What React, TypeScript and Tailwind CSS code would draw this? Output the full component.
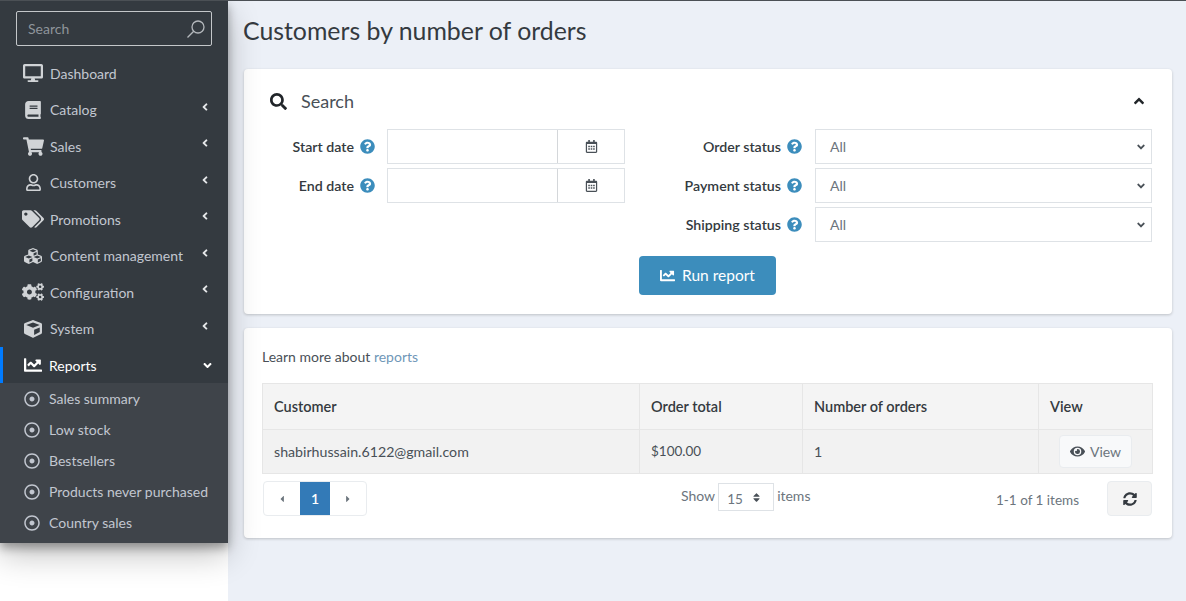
import { ReactNode } from "react";
import { IconType } from "react-icons";
import {
  FaAngleDown,
  FaAngleLeft,
  FaAngleUp,
  FaBook,
  FaCaretLeft,
  FaCaretRight,
  FaChartLine,
  FaCogs,
  FaCube,
  FaCubes,
  FaDesktop,
  FaEye,
  FaQuestionCircle,
  FaRegCalendarAlt,
  FaRegDotCircle,
  FaRegUser,
  FaSearch,
  FaShoppingCart,
  FaSort,
  FaSyncAlt,
  FaTags,
} from "react-icons/fa";

const menu: { label: string; icon: IconType; size: string; arrow?: boolean }[] = [
  { label: "Dashboard", icon: FaDesktop, size: "text-[20px]" },
  { label: "Catalog", icon: FaBook, size: "text-[18px]", arrow: true },
  { label: "Sales", icon: FaShoppingCart, size: "text-[21px]", arrow: true },
  { label: "Customers", icon: FaRegUser, size: "text-[17px]", arrow: true },
  { label: "Promotions", icon: FaTags, size: "text-[22px]", arrow: true },
  { label: "Content management", icon: FaCubes, size: "text-[18px]", arrow: true },
  { label: "Configuration", icon: FaCogs, size: "text-[22px]", arrow: true },
  { label: "System", icon: FaCube, size: "text-[18px]", arrow: true },
];

const reports = ["Sales summary", "Low stock", "Bestsellers", "Products never purchased", "Country sales"];

function Sidebar() {
  return (
    <aside className="relative z-10 shrink-0 w-[228px] h-[542px] bg-[#343a40] text-[#c2c7d0] shadow-[0_5px_9px_rgba(0,0,0,0.32),0_12px_30px_rgba(0,0,0,0.24)]">
      <div className="px-4 pt-[10px] pb-[9px]">
        <div className="flex items-center justify-between h-[35px] border border-[#c4c7ca] rounded-[2px] pl-[11px] pr-[5px]">
          <span className="text-[14px] text-[#8f959b]">Search</span>
          <svg width="20" height="20" viewBox="0 0 20 20" fill="none" stroke="#b4b8bc" strokeWidth="1.3">
            <circle cx="12" cy="8" r="6" />
            <path d="M7.7 12.3 1.5 18.5" />
          </svg>
        </div>
      </div>
      {menu.map((item) => (
        <div key={item.label} className="flex items-center h-[36.5px] pl-[22px] pr-[17px]">
          <span className="flex justify-center w-[22px] mr-[6px]">
            <item.icon className={`${item.size} text-[#d0d3d6]`} />
          </span>
          <span className="text-[14px] flex-1">{item.label}</span>
          {item.arrow && <FaAngleLeft className="text-[12px] text-[#e4e6e8] -mt-[6px]" />}
        </div>
      ))}
      <div className="flex items-center h-[36px] pl-[21px] pr-[14px] text-white border-l-[3px] border-[#007bff]">
        <span className="flex justify-center w-[18px] mr-[7px]">
          <FaChartLine className="text-[18px]" />
        </span>
        <span className="text-[14px] flex-1">Reports</span>
        <FaAngleDown className="text-[13px]" />
      </div>
      <div className="bg-[#3f444a] h-[160px]">
        {reports.map((r) => (
          <div key={r} className="flex items-center h-[31px] pl-[24px]">
            <FaRegDotCircle className="text-[16px] text-[#c2c7d0] mr-[9px]" />
            <span className="text-[14px]">{r}</span>
          </div>
        ))}
      </div>
    </aside>
  );
}

function Help() {
  return <FaQuestionCircle className="text-[15px] text-[#3c8dbc] shrink-0" />;
}

function FieldRow({ label, width, children }: { label: string; width: string; children: ReactNode }) {
  return (
    <div className="flex items-center h-[35px]">
      <div className={`flex items-center justify-end gap-[6px] ${width}`}>
        <span className="text-[14.2px] font-semibold text-[#343a40]">{label}</span>
        <Help />
      </div>
      {children}
    </div>
  );
}

function DateInput() {
  return (
    <div className="flex ml-3 w-[238px] h-[35px] border border-[#dee2e6]">
      <div className="w-[170px] border-r border-[#d4d7da]" />
      <div className="flex-1 flex items-center justify-center">
        <FaRegCalendarAlt className="text-[13px] text-[#495057]" />
      </div>
    </div>
  );
}

function StatusSelect() {
  return (
    <div className="flex items-center justify-between ml-[13px] w-[337px] h-[35px] border border-[#dee2e6] pl-[14px] pr-[4px]">
      <span className="text-[14px] text-[#6c757d]">All</span>
      <FaAngleDown className="text-[12px] text-[#495057]" />
    </div>
  );
}

function SearchCard() {
  return (
    <section className="bg-white rounded-[4px] shadow-[0_1px_3px_rgba(0,0,0,0.2)] pb-[19px]">
      <div className="flex items-center justify-between h-[60px] pt-[4px] pl-[26px] pr-[25px]">
        <div className="flex items-center gap-[14px]">
          <FaSearch className="text-[17px] text-[#212529]" />
          <span className="text-[18px] text-[#495057]">Search</span>
        </div>
        <FaAngleUp className="text-[16px] text-[#212529]" />
      </div>
      <div className="flex justify-between pr-[20px]">
        <div className="flex flex-col gap-[4px]">
          <FieldRow label="Start date" width="w-[131px]">
            <DateInput />
          </FieldRow>
          <FieldRow label="End date" width="w-[131px]">
            <DateInput />
          </FieldRow>
        </div>
        <div className="flex flex-col gap-[4px]">
          <FieldRow label="Order status" width="w-[150px]">
            <StatusSelect />
          </FieldRow>
          <FieldRow label="Payment status" width="w-[150px]">
            <StatusSelect />
          </FieldRow>
          <FieldRow label="Shipping status" width="w-[150px]">
            <StatusSelect />
          </FieldRow>
        </div>
      </div>
      <div className="flex justify-center mt-[14px] pr-px">
        <button className="flex items-center justify-center gap-[7px] w-[137px] h-[39px] rounded-[4px] bg-[#3c8dbc] text-white text-[15.5px]">
          <FaChartLine className="text-[15px]" />
          Run report
        </button>
      </div>
    </section>
  );
}

function ResultsCard() {
  return (
    <section className="mt-[14px] bg-white rounded-[4px] shadow-[0_1px_3px_rgba(0,0,0,0.2)] pl-[18px] pr-[19px] pb-[22px]">
      <p className="h-[55px] pt-[19px] text-[14px] leading-[20px] text-[#495057]">
        Learn more about <a className="text-[#6f97b8]">reports</a>
      </p>
      <table className="w-full table-fixed border-collapse text-[14.2px] text-[#495057]">
        <thead>
          <tr className="h-[46px] bg-[#f4f4f4] text-left text-[14.5px] text-[#343a40]">
            <th className="w-[377px] pl-[11px] font-semibold border border-[#e6e6e6]">Customer</th>
            <th className="w-[163px] pl-[11px] font-semibold border border-[#e6e6e6]">Order total</th>
            <th className="w-[236px] pl-[11px] font-semibold border border-[#e6e6e6]">Number of orders</th>
            <th className="pl-[11px] font-semibold border border-[#e6e6e6]">View</th>
          </tr>
        </thead>
        <tbody>
          <tr className="h-[44px] bg-[#f2f2f2]">
            <td className="pl-[11px] border border-[#e6e6e6]">shabirhussain.6122@gmail.com</td>
            <td className="pl-[11px] border border-[#e6e6e6] text-[13.5px]">$100.00</td>
            <td className="pl-[11px] border border-[#e6e6e6]">1</td>
            <td className="border border-[#e6e6e6]">
              <div className="flex justify-center">
                <button className="flex items-center justify-center gap-[5px] w-[73px] h-[33px] bg-[#f8f9fa] border border-[#e9ecef] rounded-[4px] text-[14px] text-[#6c757d]">
                  <FaEye className="text-[15px] text-[#495057]" />
                  View
                </button>
              </div>
            </td>
          </tr>
        </tbody>
      </table>
      <div className="flex items-start mt-[7px] h-[35px] pl-px pr-px text-[14px] text-[#6c757d]">
        <div className="flex w-[104px] h-[35px] border border-[#e9ecef] rounded-[4px]">
          <div className="flex w-[36px] items-center justify-center">
            <FaCaretLeft className="text-[10px] text-[#6c757d]" />
          </div>
          <div className="flex w-[30px] items-center justify-center bg-[#337ab7] text-white text-[14px] font-semibold">1</div>
          <div className="flex flex-1 items-center justify-center">
            <FaCaretRight className="text-[10px] text-[#6c757d]" />
          </div>
        </div>
        <div className="flex items-start ml-[314px] h-[28px] mt-[2px] gap-[3px]">
          <span className="leading-[26px]">Show</span>
          <div className="flex items-center justify-between w-[56px] h-[28px] border border-[#dee2e6] pl-[8px] pr-[11px] pt-[5px]">
            <span className="text-[13.5px]">15</span>
            <FaSort className="text-[11px] text-[#495057] -mt-[5px]" />
          </div>
          <span className="leading-[26px]">items</span>
        </div>
        <span className="ml-auto mr-[28px] h-[35px] text-[13.5px] leading-[38px]">1-1 of 1 items</span>
        <div className="flex items-center justify-center w-[45px] h-[35px] bg-[#f4f4f4] border border-[#e9ecef] rounded-[4px]">
          <FaSyncAlt className="text-[14px] text-[#343a40]" />
        </div>
      </div>
    </section>
  );
}

export default function App() {
  return (
    <div className="flex w-[1186px] h-[601px] overflow-hidden bg-white border-t border-[#4b5055] font-['Lato','Noto_Sans',sans-serif]">
      <Sidebar />
      <main className="flex-1 min-w-0 bg-[#ecf0f7] pl-[16px] pr-[14px]">
        <h1 className="h-[68px] pt-[10px] -ml-px text-[24.85px] leading-[38px] text-[#343a40]">Customers by number of orders</h1>
        <SearchCard />
        <ResultsCard />
      </main>
    </div>
  );
}
